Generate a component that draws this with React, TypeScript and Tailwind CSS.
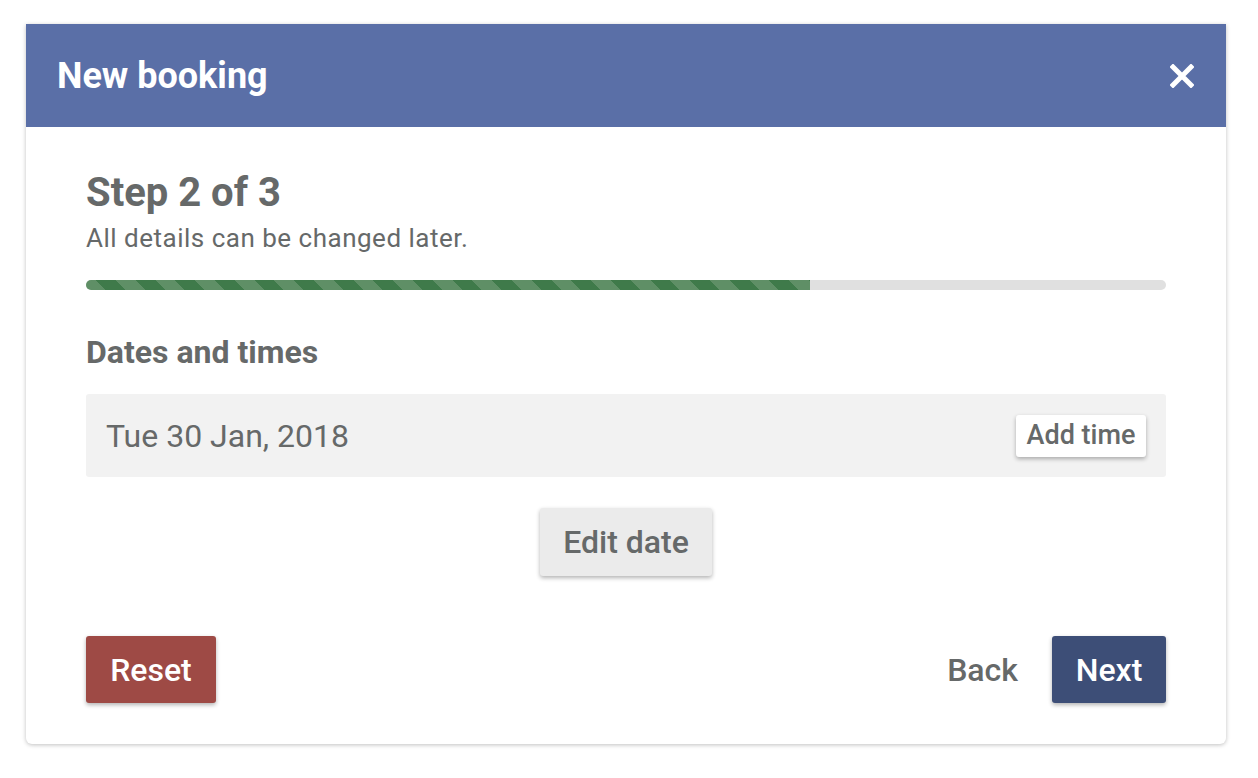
import React from "react";

export default function App() {
  return (
    <div
      className="min-h-screen bg-white px-[26px] pt-[24px] text-[#666969]"
      style={{ fontFamily: "Roboto, 'Liberation Sans', sans-serif" }}
    >
      <div className="w-[1200px] overflow-hidden rounded-b-[6px] bg-white shadow-[0_1px_4px_rgba(0,0,0,0.25)]">
        {/* Header */}
        <div className="flex h-[103px] items-center justify-between bg-[#5a6fa7] pl-[31px] pr-[32px]">
          <h1 className="text-[36px] font-bold leading-[44px] text-white">New booking</h1>
          <button className="text-white">
            <svg width="24" height="24" viewBox="0 0 24 24">
              <path d="M3 3 L21 21 M21 3 L3 21" stroke="white" strokeWidth="5" strokeLinecap="square" />
            </svg>
          </button>
        </div>

        {/* Body */}
        <div className="px-[60px] pt-[44px] pb-[41px]">
          <h2 className="text-[40px] font-bold leading-[44px]">Step 2 of 3</h2>
          <p className="mt-[7px] text-[26px] leading-[32px] tracking-[0.5px]">All details can be changed later.</p>

          <div className="mt-[26px] h-[10px] w-full overflow-hidden rounded-full bg-[#e0e0e0]">
            <div className="h-full w-[67%] bg-[repeating-linear-gradient(45deg,#5f8f66_0px,#5f8f66_14px,#3f7a4a_14px,#3f7a4a_28px)]" />
          </div>

          <h3 className="mt-[42px] text-[32px] font-bold leading-[40px]">Dates and times</h3>

          <div className="mt-[22px] flex h-[83px] items-center justify-between rounded-[3px] bg-[#f2f2f2] pl-[20px] pr-[20px]">
            <span className="text-[32px]">Tue 30 Jan, 2018</span>
            <button className="h-[42px] w-[130px] rounded-[3px] bg-white text-[27px] font-medium shadow-[0_2px_4px_rgba(0,0,0,0.3)]">
              Add time
            </button>
          </div>

          <div className="mt-[31px] flex justify-center">
            <button className="h-[68px] w-[172px] rounded-[3px] bg-[#ebebeb] text-[32px] font-medium shadow-[0_2px_4px_rgba(0,0,0,0.3)]">
              Edit date
            </button>
          </div>

          <div className="mt-[60px] flex items-center justify-between">
            <button className="h-[67px] w-[130px] rounded-[3px] bg-[#9e4a45] text-[32px] font-medium text-white shadow-[0_2px_4px_rgba(0,0,0,0.3)]">
              Reset
            </button>
            <div className="flex items-center gap-[34px]">
              <button className="text-[32px] font-medium">Back</button>
              <button className="h-[67px] w-[114px] rounded-[3px] bg-[#3d4e77] text-[32px] font-medium text-white shadow-[0_2px_4px_rgba(0,0,0,0.3)]">
                Next
              </button>
            </div>
          </div>
        </div>
      </div>
    </div>
  );
}
